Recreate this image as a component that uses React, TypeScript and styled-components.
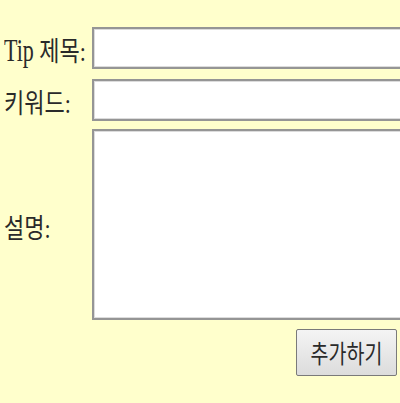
import React from 'react';
import styled, { createGlobalStyle } from 'styled-components';

const GlobalStyle = createGlobalStyle`
  html, body {
    margin: 0;
    padding: 0;
    background: #ffffcc;
    overflow: hidden;
  }
`;

const Page = styled.div`
  padding: 27px 0 0 4px;
`;

const Form = styled.form`
  display: grid;
  grid-template-columns: 88px 308px;
  align-items: center;
`;

const Label = styled.label`
  font-family: 'Liberation Serif', 'Noto Sans CJK KR', serif;
  font-size: 22px;
  color: #2a2a2a;
  white-space: nowrap;
  margin-top: ${(p: { gap: number }) => p.gap}px;
`;

// the text in the picture is drawn taller than it is wide
const Tall = styled.span`
  display: inline-block;
  transform: scaleY(${(p: { k?: number }) => p.k ?? 1.26});
  transform-origin: center;
`;

const fieldBorder = `
  box-sizing: border-box;
  width: 308px;
  border: 2px solid #959595;
  border-right: none;
  box-shadow: inset 0 1px 0 #dcdcdc, inset 1px 0 0 #dcdcdc, inset 0 -1px 0 #dcdcdc;
  background: #fff;
  padding: 4px;
  font-size: 18px;
  font-family: 'Noto Sans CJK KR', sans-serif;
  outline: none;
`;

const TextInput = styled.input`
  ${fieldBorder}
  height: 42px;
  margin: ${(p: { gap: number }) => p.gap}px 0 0;
`;

const TextArea = styled.textarea`
  ${fieldBorder}
  height: 191px;
  margin: ${(p: { gap: number }) => p.gap}px 0 0;
  resize: none;
  display: block;
`;

const ButtonCell = styled.div`
  grid-column: 2;
  display: flex;
  justify-content: flex-end;
  margin: 9px 0 0;
  padding-right: 3px;
`;

const AddButton = styled.button`
  box-sizing: border-box;
  width: 101px;
  height: 47px;
  border: 1px solid #7a7a7a;
  border-radius: 2px;
  background: linear-gradient(#f4f4f4, #dcdcdc);
  font-family: 'Noto Sans CJK KR', sans-serif;
  font-size: 19.5px;
  color: #2a2a2a;
  padding: 0;
`;

export default function App() {
  return (
    <>
      <GlobalStyle />
      <Page>
        <Form onSubmit={(e) => e.preventDefault()}>
          <Label gap={0}>
            <Tall k={1.42}>Tip</Tall> <Tall>제목:</Tall>
          </Label>
          <TextInput gap={0} />
          <Label gap={10}><Tall>키워드:</Tall></Label>
          <TextInput gap={10} />
          <Label gap={8}><Tall>설명:</Tall></Label>
          <TextArea gap={8} />
          <ButtonCell>
            <AddButton type="submit"><Tall>추가하기</Tall></AddButton>
          </ButtonCell>
        </Form>
      </Page>
    </>
  );
}
